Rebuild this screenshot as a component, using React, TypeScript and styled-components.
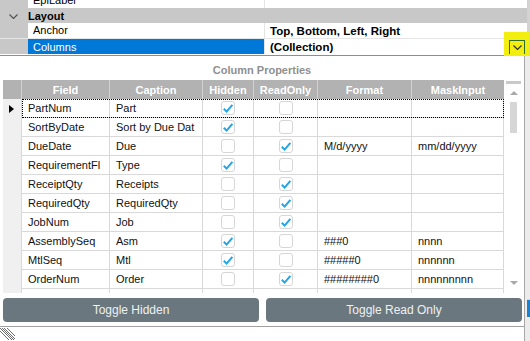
import styled, {createGlobalStyle} from "styled-components";

const GlobalStyle = createGlobalStyle`
  html, body {
    margin: 0;
    padding: 0;
    background: #f0f0f0;
  }
  body {
    font-family: "Liberation Sans", Arial, sans-serif;
  }
  * {
    box-sizing: border-box;
  }
`

interface IColumnRow {
    field: string;
    caption: string;
    hidden: boolean;
    readOnly: boolean;
    format?: string;
    mask?: string;
}

const columnRows: IColumnRow[] = [
    {field: "PartNum", caption: "Part", hidden: true, readOnly: false},
    {field: "SortByDate", caption: "Sort by Due Dat", hidden: true, readOnly: false},
    {field: "DueDate", caption: "Due", hidden: false, readOnly: true, format: "M/d/yyyy", mask: "mm/dd/yyyy"},
    {field: "RequirementFl", caption: "Type", hidden: true, readOnly: false},
    {field: "ReceiptQty", caption: "Receipts", hidden: false, readOnly: true},
    {field: "RequiredQty", caption: "RequiredQty", hidden: false, readOnly: true},
    {field: "JobNum", caption: "Job", hidden: false, readOnly: true},
    {field: "AssemblySeq", caption: "Asm", hidden: true, readOnly: false, format: "###0", mask: "nnnn"},
    {field: "MtlSeq", caption: "Mtl", hidden: true, readOnly: false, format: "#####0", mask: "nnnnnn"},
    {field: "OrderNum", caption: "Order", hidden: false, readOnly: true, format: "########0", mask: "nnnnnnnnn"},
    {field: "", caption: "", hidden: false, readOnly: false},
]

const COLS = "19px 88px 93px 51px 64px 94px 92px";
const HEADERS = ["", "Field", "Caption", "Hidden", "ReadOnly", "Format", "MaskInput"];

const Root = styled.div`
  position: relative;
  width: 530px;
  height: 341px;
  display: flex;
  flex-direction: column;
  overflow: hidden;
  background: #f0f0f0;
`

/* property grid on top */
const PropGrid = styled.div`
  height: 56px;
  display: flex;
  flex-direction: column;
  background: #fff;
  border-bottom: 1px solid #8e8e8e;
  border-right: 3px solid #d2d2d2;
`

const PropRow = styled.div<{ $h: number; $line?: boolean }>`
  height: ${p => p.$h}px;
  display: grid;
  grid-template-columns: 28px 236px 1fr;
  overflow: hidden;
  border-bottom: ${p => p.$line ? "1px solid #e6e6e6" : "none"};
`

const CategoryRow = styled.div`
  height: 15px;
  display: flex;
  align-items: center;
  background: #c8c8c8;
  font-size: 11px;
  font-weight: bold;
  color: #000;
`

const Chevron = styled.span`
  width: 28px;
  display: flex;
  justify-content: center;
  padding-right: 2px;
  padding-top: 1px;
`

const Gutter = styled.div`
  background: #c8c8c8;
`

const NameCell = styled.div<{ $selected?: boolean; $clipped?: boolean }>`
  display: flex;
  align-items: ${p => p.$clipped ? "flex-end" : "center"};
  padding-left: 5px;
  padding-bottom: ${p => p.$clipped ? "2px" : "0"};
  font-size: 11px;
  line-height: ${p => p.$clipped ? "11px" : "13px"};
  overflow: hidden;
  background: ${p => p.$selected ? "#0078d7" : "#fff"};
  color: ${p => p.$selected ? "#fff" : "#000"};
`

const ValueCell = styled.div`
  display: flex;
  align-items: center;
  justify-content: space-between;
  padding-left: 5px;
  border-left: 1px solid #e4e4e4;
  font-size: 11.5px;
  font-weight: bold;
  color: #000;
`

const DropButton = styled.div`
  position: relative;
  z-index: 2;
  width: 16px;
  height: 15px;
  margin-right: 2px;
  margin-top: 1px;
  border: 1px solid #2f6e2f;
  display: flex;
  align-items: center;
  justify-content: center;
`

const Highlight = styled.div`
  position: absolute;
  z-index: 1;
  left: 504px;
  top: 32px;
  width: 25px;
  height: 24px;
  background: #f2ee10;
`

/* column properties dropdown */
const Body = styled.div`
  flex: 1;
  display: flex;
`

const Panel = styled.div`
  width: 525px;
  display: flex;
  flex-direction: column;
  background: #fff;
  border-right: 1px solid #a8a8a8;
`

const RightStrip = styled.div`
  flex: 1;
  display: flex;
  flex-direction: column;
  background: #ececec;
`

const BlueBit = styled.div`
  margin-top: 243px;
  margin-left: 2px;
  height: 18px;
  background: #1b82d2;
  border-top: 1px solid #e6e08a;
`

const Title = styled.div`
  height: 24px;
  padding-top: 8px;
  text-align: center;
  font-size: 11px;
  font-weight: bold;
  color: #8f8f8f;
`

const GridArea = styled.div`
  height: 213px;
  display: flex;
  padding-left: 3px;
  overflow: hidden;
`

const Table = styled.div`
  width: 501px;
  display: flex;
  flex-direction: column;
`

const HeaderRow = styled.div`
  height: 19px;
  flex-shrink: 0;
  display: grid;
  grid-template-columns: ${COLS};
  background: #b2b2b2;
`

const HeaderCell = styled.div`
  display: flex;
  align-items: center;
  justify-content: center;
  border-right: 1px solid #d2d2d2;
  color: #fff;
  font-size: 11px;
  font-weight: bold;
  &:last-child {
    border-right: none;
  }
`

const BodyRow = styled.div`
  position: relative;
  height: 19px;
  flex-shrink: 0;
  display: grid;
  grid-template-columns: ${COLS};
`

const Cell = styled.div`
  border-right: 1px solid #d9d9d9;
  border-bottom: 1px solid #d9d9d9;
  padding: 0 5px 0 6px;
  font-size: 11px;
  line-height: 18px;
  color: #111;
  white-space: nowrap;
  overflow: hidden;
`

const SelectorCell = styled.div`
  display: flex;
  align-items: center;
  padding-left: 6px;
  background: #f0f0f0;
  border-right: 1px solid #d9d9d9;
`

const RowArrow = styled.span`
  width: 0;
  height: 0;
  border-left: 5px solid #000;
  border-top: 4px solid transparent;
  border-bottom: 4px solid transparent;
`

const CheckCell = styled.div`
  display: flex;
  align-items: center;
  justify-content: center;
  border-right: 1px solid #d9d9d9;
  border-bottom: 1px solid #d9d9d9;
`

const CheckBox = styled.span`
  width: 14px;
  height: 14px;
  border: 1px solid #d6d6d6;
  border-radius: 3px;
  background: #fff;
  display: flex;
  align-items: center;
  justify-content: center;
`

const FocusBox = styled.div`
  position: absolute;
  left: 19px;
  top: 0;
  right: 0;
  bottom: 0;
  border: 1px dotted #000;
  pointer-events: none;
`

const ScrollBar = styled.div`
  width: 15px;
  margin-left: 2px;
  display: flex;
  flex-direction: column;
  align-items: center;
  padding-top: 1px;
`

const ScrollCap = styled.div`
  width: 15px;
  height: 3px;
  background: #c9c9c9;
`

const ArrowBox = styled.div<{ $h: number }>`
  height: ${p => p.$h}px;
  display: flex;
  align-items: center;
  justify-content: center;
`

const Triangle = styled.span<{ $up?: boolean }>`
  width: 0;
  height: 0;
  border-left: 4px solid transparent;
  border-right: 4px solid transparent;
  ${p => p.$up ? "border-bottom: 4px solid #a9a9a9;" : "border-top: 4px solid #a9a9a9;"}
`

const Thumb = styled.div`
  width: 7px;
  height: 31px;
  background: #d6d6d6;
`

const Spacer = styled.div`
  flex: 1;
`

const ButtonBar = styled.div`
  height: 34px;
  display: flex;
  gap: 7px;
  padding: 5px 2px 5px 3px;
  border-bottom: 1px solid #a0a0a0;
`

const ActionButton = styled.button`
  flex: 1;
  height: 24px;
  border: none;
  border-radius: 4px;
  background: #6b777e;
  color: #eef1f1;
  font-family: "Liberation Sans", Arial, sans-serif;
  font-size: 12px;
  padding: 0;
  cursor: pointer;
`

const Footer = styled.div`
  flex: 1;
  display: flex;
  align-items: flex-end;
`

const Check = () => (
    <svg width="12" height="11" viewBox="0 0 12 11">
        <path d="M1.8 5.8 L4.6 8.6 L10.4 1.8" fill="none" stroke="#23a4e6" strokeWidth="2"/>
    </svg>
)

const ChevronDown = ({color}: { color: string }) => (
    <svg width="9" height="5" viewBox="0 0 9 5">
        <path d="M0.5 0.5 L4.5 4.5 L8.5 0.5" fill="none" stroke={color} strokeWidth="1.2"/>
    </svg>
)

const Grip = () => (
    <svg width="15" height="13" viewBox="0 0 15 13">
        {[-3, 0, 2, 4, 7].map(o => (
            <line key={o} x1={o} y1={0} x2={o + 12} y2={12} stroke="#6e6e6e" strokeWidth="1"/>
        ))}
    </svg>
)

const App = () => {
    return (
        <Root>
            <GlobalStyle/>
            <Highlight/>
            <PropGrid>
                <PropRow $h={8}>
                    <Gutter/>
                    <NameCell $clipped>EpiLabel</NameCell>
                    <ValueCell/>
                </PropRow>
                <CategoryRow>
                    <Chevron><ChevronDown color="#555"/></Chevron>
                    Layout
                </CategoryRow>
                <PropRow $h={16} $line>
                    <Gutter/>
                    <NameCell>Anchor</NameCell>
                    <ValueCell>Top, Bottom, Left, Right</ValueCell>
                </PropRow>
                <PropRow $h={15}>
                    <Gutter/>
                    <NameCell $selected>Columns</NameCell>
                    <ValueCell>
                        (Collection)
                        <DropButton><ChevronDown color="#333"/></DropButton>
                    </ValueCell>
                </PropRow>
            </PropGrid>
            <Body>
                <Panel>
                    <Title>Column Properties</Title>
                    <GridArea>
                        <Table>
                            <HeaderRow>
                                {HEADERS.map((h, i) => <HeaderCell key={i}>{h}</HeaderCell>)}
                            </HeaderRow>
                            {columnRows.map((row, index) => (
                                <BodyRow key={index}>
                                    <SelectorCell>{index === 0 && <RowArrow/>}</SelectorCell>
                                    <Cell>{row.field}</Cell>
                                    <Cell>{row.caption}</Cell>
                                    <CheckCell>
                                        {row.field && <CheckBox>{row.hidden && <Check/>}</CheckBox>}
                                    </CheckCell>
                                    <CheckCell>
                                        {row.field && <CheckBox>{row.readOnly && <Check/>}</CheckBox>}
                                    </CheckCell>
                                    <Cell>{row.format}</Cell>
                                    <Cell>{row.mask}</Cell>
                                    {index === 0 && <FocusBox/>}
                                </BodyRow>
                            ))}
                        </Table>
                        <ScrollBar>
                            <ScrollCap/>
                            <ArrowBox $h={18}><Triangle $up/></ArrowBox>
                            <Thumb/>
                            <Spacer/>
                            <ArrowBox $h={14}><Triangle/></ArrowBox>
                            <ArrowBox $h={3}/>
                        </ScrollBar>
                    </GridArea>
                    <ButtonBar>
                        <ActionButton>Toggle Hidden</ActionButton>
                        <ActionButton>Toggle Read Only</ActionButton>
                    </ButtonBar>
                    <Footer><Grip/></Footer>
                </Panel>
                <RightStrip>
                    <BlueBit/>
                </RightStrip>
            </Body>
        </Root>
    )
}

export default App;
